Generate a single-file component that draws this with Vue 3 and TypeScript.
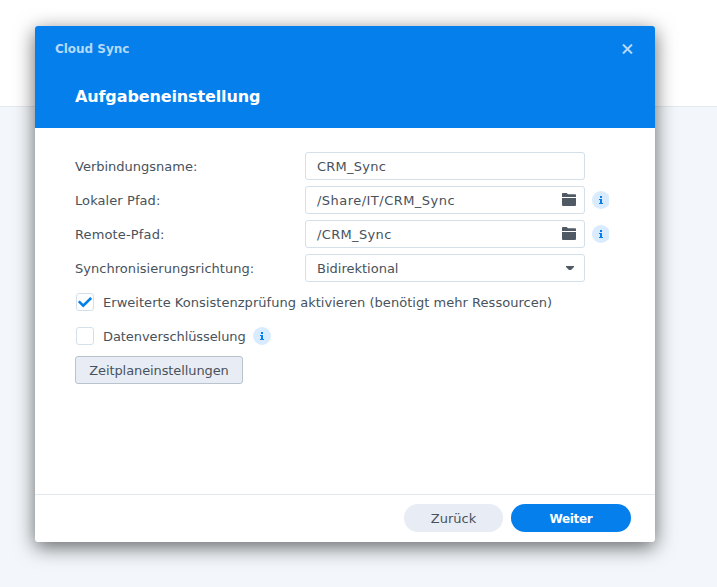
<script setup lang="ts">
import { ref } from 'vue'

type Kind = 'text' | 'folder' | 'select'
interface Field {
  id: string
  label: string
  value: string
  kind: Kind
}

const fields: Field[] = [
  { id: 'name', label: 'Verbindungsname:', value: 'CRM_Sync', kind: 'text' },
  { id: 'local', label: 'Lokaler Pfad:', value: '/Share/IT/CRM_Sync', kind: 'folder' },
  { id: 'remote', label: 'Remote-Pfad:', value: '/CRM_Sync', kind: 'folder' },
  { id: 'direction', label: 'Synchronisierungsrichtung:', value: 'Bidirektional', kind: 'select' },
]
const consistency = ref(true)
const encryption = ref(false)
</script>

<template>
  <div class="page">
    <section class="dialog">
      <header class="head">
        <div class="bar">
          <span class="app">Cloud Sync</span>
          <svg class="close" width="11" height="10" viewBox="0 0 11 10"><path d="M1 .5 10 9.5M10 .5 1 9.5" /></svg>
        </div>
        <h1 class="title">Aufgabeneinstellung</h1>
      </header>
      <main class="body">
        <div v-for="f in fields" :key="f.id" class="row">
          <span class="label" :class="'l-' + f.id">{{ f.label }}</span>
          <div class="input">
            <span class="value" :class="'v-' + f.id">{{ f.value }}</span>
            <svg v-if="f.kind === 'folder'" class="folder" width="14" height="13" viewBox="0 0 14 13"><path d="M0 4V.8Q0 0 .8 0H4.6L6 1.2H13.2q.8 0 .8.8V4ZM0 5H14V12q0 1-1 1H1Q0 13 0 12Z" /></svg>
            <svg v-if="f.kind === 'select'" class="caret" width="8" height="4" viewBox="0 0 8 4"><path d="M0 0H8V1L5 4H3L0 1Z" /></svg>
          </div>
          <svg v-if="f.kind === 'folder'" class="info" width="17" height="18" viewBox="0 0 17 18"><circle cx="9" cy="9" r="9" /><path d="M8 5h2v2H8ZM7 8h3v4h1v1H7v-1h1V9H7Z" /></svg>
        </div>
        <div class="row">
          <span class="check" @click="consistency = !consistency">
            <svg v-if="consistency" width="14" height="11" viewBox="0 0 14 11"><path d="M.8 4.3 5.2 8.7 13.2 .9" /></svg>
          </span>
          <span class="option c-consistency">Erweiterte Konsistenzprüfung aktivieren (benötigt mehr Ressourcen)</span>
        </div>
        <div class="row">
          <span class="check" @click="encryption = !encryption">
            <svg v-if="encryption" width="14" height="11" viewBox="0 0 14 11"><path d="M.8 4.3 5.2 8.7 13.2 .9" /></svg>
          </span>
          <span class="option c-encryption">Datenverschlüsselung</span>
          <svg class="info" width="18" height="18" viewBox="0 0 18 18"><circle cx="9" cy="9" r="9" /><path d="M8 5h2v2H8ZM7 8h3v4h1v1H7v-1h1V9H7Z" /></svg>
        </div>
        <button class="schedule">Zeitplaneinstellungen</button>
      </main>
      <footer class="foot">
        <button class="pill back">Zurück</button>
        <button class="pill next">Weiter</button>
      </footer>
    </section>
  </div>
</template>

<style>
body { margin: 0; }
</style>

<style scoped>
.page {
  box-sizing: border-box;
  width: 717px;
  height: 587px;
  padding: 26px 0 0 35px;
  overflow: hidden;
  background: linear-gradient(#fff 106px, #e4e9ee 106px, #e4e9ee 107px, #f3f7fb 107px);
  font: 13px/18px Verdana, "DejaVu Sans", sans-serif;
  color: #48525c;
}
.dialog {
  display: flex;
  flex-direction: column;
  width: 620px;
  height: 516px;
  overflow: hidden;
  border-radius: 3px;
  background: #fff;
  box-shadow: 0 5px 20px rgba(0, 0, 0, .6);
}
.head { height: 102px; background: #057feb; color: #fff; }
.bar {
  display: flex;
  align-items: center;
  justify-content: space-between;
  height: 46px;
  padding: 0 22px 0 20px;
}
.app { font-size: 12px; font-weight: 700; color: #b4d9f9; letter-spacing: -.03px; }
.close { fill: none; stroke: #b4d9f9; stroke-width: 2; }
.title { margin: 14px 0 0 40px; font-size: 16px; line-height: 22px; font-weight: 700; letter-spacing: -.12px; }
.body {
  display: flex;
  flex: 1;
  flex-direction: column;
  gap: 6px;
  padding: 24px 40px 0;
}
.row { display: flex; align-items: center; height: 28px; white-space: nowrap; }
.label, .value, .option { padding-top: 2px; }
.label { width: 230px; }
.l-local { letter-spacing: .08px; }
.l-remote { letter-spacing: .14px; }
.l-direction { letter-spacing: .04px; }
.v-name { letter-spacing: .25px; }
.v-local { letter-spacing: .47px; }
.v-remote { letter-spacing: .35px; }
.c-consistency { letter-spacing: .035px; }
.c-encryption { letter-spacing: -.08px; }
.input {
  box-sizing: border-box;
  display: flex;
  align-items: center;
  justify-content: space-between;
  width: 280px;
  height: 28px;
  padding: 0 8px 0 11px;
  border: 1px solid #d3dfe9;
  border-radius: 3px;
}
.folder { margin-bottom: 1px; fill: #505a64; }
.caret { margin-right: 2px; fill: #505a64; }
.info { margin-left: 7px; }
.info circle { fill: #d9ebfe; }
.info path { fill: #057feb; }
.check {
  box-sizing: border-box;
  display: flex;
  align-items: center;
  justify-content: center;
  width: 18px;
  height: 18px;
  margin: 0 9px 0 1px;
  border: 1px solid #d3dfe9;
  border-radius: 3px;
}
.check path { fill: none; stroke: #057feb; stroke-width: 2.6; }
button { padding: 2px 0 0; border: 0; font: inherit; color: inherit; }
.schedule {
  box-sizing: border-box;
  width: 168px;
  height: 28px;
  border: 1px solid #b8c3cd;
  border-radius: 3px;
  background: #e8edf5;
  letter-spacing: -.1px;
}
.foot {
  box-sizing: border-box;
  display: flex;
  gap: 8px;
  justify-content: flex-end;
  height: 48px;
  padding: 9px 24px 0 0;
  border-top: 1px solid #e1e8ee;
}
.pill { height: 28px; border-radius: 14px; }
.back { width: 99px; background: #e8edf5; }
.next { width: 120px; background: #057feb; color: #fff; font-size: 12px; font-weight: 700; letter-spacing: -.35px; }
</style>
